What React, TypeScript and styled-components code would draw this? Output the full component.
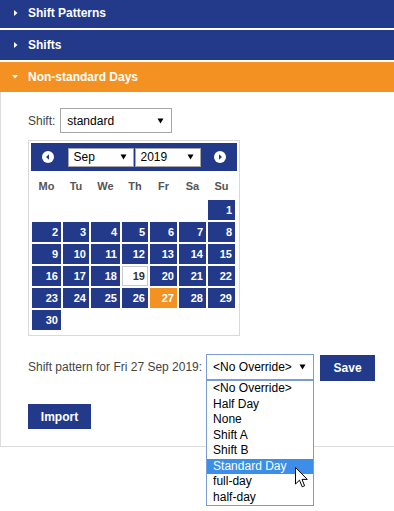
import React from "react";
import styled, { createGlobalStyle } from "styled-components";

const NAVY = "#233a8b";
const ORANGE = "#f39223";

const Global = createGlobalStyle`
  html, body { margin: 0; padding: 0; background: #fff; }
  body {
    font-family: "Liberation Sans", Arial, sans-serif;
    font-size: 12px;
    color: #444;
  }
`;

const Page = styled.div`
  display: flex;
  flex-direction: column;
  margin-top: -2px;
  min-height: 520px;
`;

const Bars = styled.div`
  display: flex;
  flex-direction: column;
  gap: 2px;
`;

const Bar = styled.div<{ $open?: boolean }>`
  height: 30px;
  display: flex;
  align-items: center;
  gap: 10px;
  padding-left: 12px;
  background: ${(p) => (p.$open ? ORANGE : NAVY)};
  color: #fff;
  font-weight: bold;
  font-size: 12px;
`;

const BarIcon = styled.svg`
  width: 6px;
  height: 8px;
  flex: none;
`;

const Panel = styled.div`
  border-left: 1px solid #dcdcdc;
  border-bottom: 1px solid #dcdcdc;
  padding: 16px 0 17px 27px;
  display: flex;
  flex-direction: column;
  align-items: flex-start;
`;

const Row = styled.div<{ $gap: number }>`
  display: flex;
  align-items: center;
  gap: ${(p) => p.$gap}px;
`;

const Label = styled.span`
  color: #444;
  font-size: 12px;
`;

const Select = styled.div<{ $w: number; $h: number; $pad: number; $focus?: boolean }>`
  box-sizing: border-box;
  width: ${(p) => p.$w}px;
  height: ${(p) => p.$h}px;
  display: flex;
  align-items: center;
  justify-content: space-between;
  padding: 0 ${(p) => p.$pad + 1}px 0 ${(p) => p.$pad}px;
  border: 1px solid ${(p) => (p.$focus ? "#7b9bd6" : "#a6a6a6")};
  background: #fff;
  color: #000;
  font-size: 12px;
  white-space: nowrap;
`;

const Caret = styled.svg`
  width: 7px;
  height: 6px;
  flex: none;
`;

const CalBox = styled.div`
  margin-top: 7px;
  box-sizing: border-box;
  width: 212px;
  border: 1px solid #d9d9d9;
  padding: 2px;
`;

const CalHeader = styled.div`
  height: 28px;
  background: ${NAVY};
  display: flex;
  align-items: center;
  justify-content: space-between;
  padding: 0 11px;
`;

const NavIcon = styled.svg`
  width: 12px;
  height: 12px;
  flex: none;
`;

const SelectPair = styled.div`
  display: flex;
  gap: 1px;
`;

const Grid = styled.div`
  display: grid;
  grid-template-columns: 29px 26px 29px 26px 27px 27px 27px;
  grid-template-rows: 25px;
  grid-auto-rows: 20px;
  gap: 2px;
  padding: 2px 2px 3px 1px;
`;

const DayName = styled.div`
  display: flex;
  align-items: center;
  justify-content: center;
  font-weight: bold;
  font-size: 11px;
  color: #555;
`;

type Kind = "normal" | "today" | "selected";

const Day = styled.div<{ $kind: Kind }>`
  box-sizing: border-box;
  display: flex;
  align-items: center;
  justify-content: flex-end;
  padding-right: ${(p) => (p.$kind === "today" ? 2 : 3)}px;
  font-weight: bold;
  font-size: 11px;
  color: ${(p) => (p.$kind === "today" ? "#333" : "#fff")};
  background: ${(p) => (p.$kind === "today" ? "#fff" : p.$kind === "selected" ? ORANGE : NAVY)};
  border: ${(p) => (p.$kind === "today" ? "1px solid #c8c8c8" : "none")};
`;

const Blank = styled.div``;

const Button = styled.button<{ $w: number }>`
  box-sizing: border-box;
  width: ${(p) => p.$w}px;
  height: 26px;
  border: none;
  background: ${NAVY};
  color: #fff;
  font-family: "Liberation Sans", Arial, sans-serif;
  font-weight: bold;
  font-size: 12px;
  padding: 0;
  cursor: pointer;
`;

const PatternRow = styled(Row)`
  margin-top: 17px;
`;

const ImportButton = styled(Button)`
  margin-top: 23px;
  height: 25px;
`;

const SaveButton = styled(Button)`
  margin-left: 2px;
  margin-top: 2px;
`;

const DropWrap = styled.div`
  position: relative;
`;

const List = styled.div`
  position: absolute;
  left: 0;
  top: 100%;
  box-sizing: border-box;
  width: 108px;
  border: 1px solid #7b9bd6;
  background: #fff;
  z-index: 2;
`;

const Option = styled.div<{ $hi?: boolean }>`
  height: 15.5px;
  line-height: 15.5px;
  padding-left: 6px;
  font-size: 12px;
  white-space: nowrap;
  color: ${(p) => (p.$hi ? "#fff" : "#000")};
  background: ${(p) => (p.$hi ? "#3c8ee8" : "transparent")};
`;

const Cursor = styled.svg`
  position: absolute;
  left: 88px;
  top: 86px;
  width: 13px;
  height: 21px;
  z-index: 3;
`;

const DownCaret = () => (
  <Caret viewBox="0 0 7 6">
    <polygon points="0.5,0.5 6.5,0.5 3.5,5.5" fill="#000" />
  </Caret>
);

const days: (number | null)[] = [null, null, null, null, null, null];
for (let d = 1; d <= 30; d++) days.push(d);

const options = ["<No Override>", "Half Day", "None", "Shift A", "Shift B", "Standard Day", "full-day", "half-day"];

export default function App() {
  return (
    <>
      <Global />
      <Page>
        <Bars>
          <Bar>
            <BarIcon viewBox="0 0 6 8">
              <polygon points="2,1 5.5,4 2,7" fill="#fff" />
            </BarIcon>
            Shift Patterns
          </Bar>
          <Bar>
            <BarIcon viewBox="0 0 6 8">
              <polygon points="2,1 5.5,4 2,7" fill="#fff" />
            </BarIcon>
            Shifts
          </Bar>
          <Bar $open>
            <BarIcon viewBox="0 0 6 8">
              <polygon points="0,2 6,2 3,5.5" fill="#fff" />
            </BarIcon>
            Non-standard Days
          </Bar>
        </Bars>
        <Panel>
          <Row $gap={5}>
            <Label>Shift:</Label>
            <Select $w={112} $h={25} $pad={6}>
              standard
              <DownCaret />
            </Select>
          </Row>

          <CalBox>
            <CalHeader>
              <NavIcon viewBox="0 0 12 12">
                <circle cx="6" cy="6" r="6" fill="#fff" />
                <polygon points="7,3.3 4,6 7,8.7" fill={NAVY} />
              </NavIcon>
              <SelectPair>
                <Select $w={66} $h={19} $pad={5}>
                  Sep
                  <DownCaret />
                </Select>
                <Select $w={66} $h={19} $pad={5}>
                  2019
                  <DownCaret />
                </Select>
              </SelectPair>
              <NavIcon viewBox="0 0 12 12">
                <circle cx="6" cy="6" r="6" fill="#fff" />
                <polygon points="5,3.3 8,6 5,8.7" fill={NAVY} />
              </NavIcon>
            </CalHeader>
            <Grid>
              {["Mo", "Tu", "We", "Th", "Fr", "Sa", "Su"].map((n) => (
                <DayName key={n}>{n}</DayName>
              ))}
              {days.map((d, i) =>
                d === null ? (
                  <Blank key={`b${i}`} />
                ) : (
                  <Day key={d} $kind={d === 19 ? "today" : d === 27 ? "selected" : "normal"}>
                    {d}
                  </Day>
                )
              )}
            </Grid>
          </CalBox>

          <PatternRow $gap={4}>
            <Label>Shift pattern for Fri 27 Sep 2019:</Label>
            <DropWrap>
              <Select $w={108} $h={26} $pad={6} $focus>
                {"<No Override>"}
                <DownCaret />
              </Select>
              <List>
                {options.map((o) => (
                  <Option key={o} $hi={o === "Standard Day"}>
                    {o}
                  </Option>
                ))}
                <Cursor viewBox="0 0 13 21">
                  <path
                    d="M0.5,0.5 L0.5,17 L4.5,13.2 L7.2,19.8 L9.6,18.8 L7,12.4 L12.3,12.4 Z"
                    fill="#fff"
                    stroke="#000"
                    strokeWidth="1"
                    strokeLinejoin="round"
                  />
                </Cursor>
              </List>
            </DropWrap>
            <SaveButton $w={55}>Save</SaveButton>
          </PatternRow>

          <ImportButton $w={63}>Import</ImportButton>
        </Panel>
      </Page>
    </>
  );
}
